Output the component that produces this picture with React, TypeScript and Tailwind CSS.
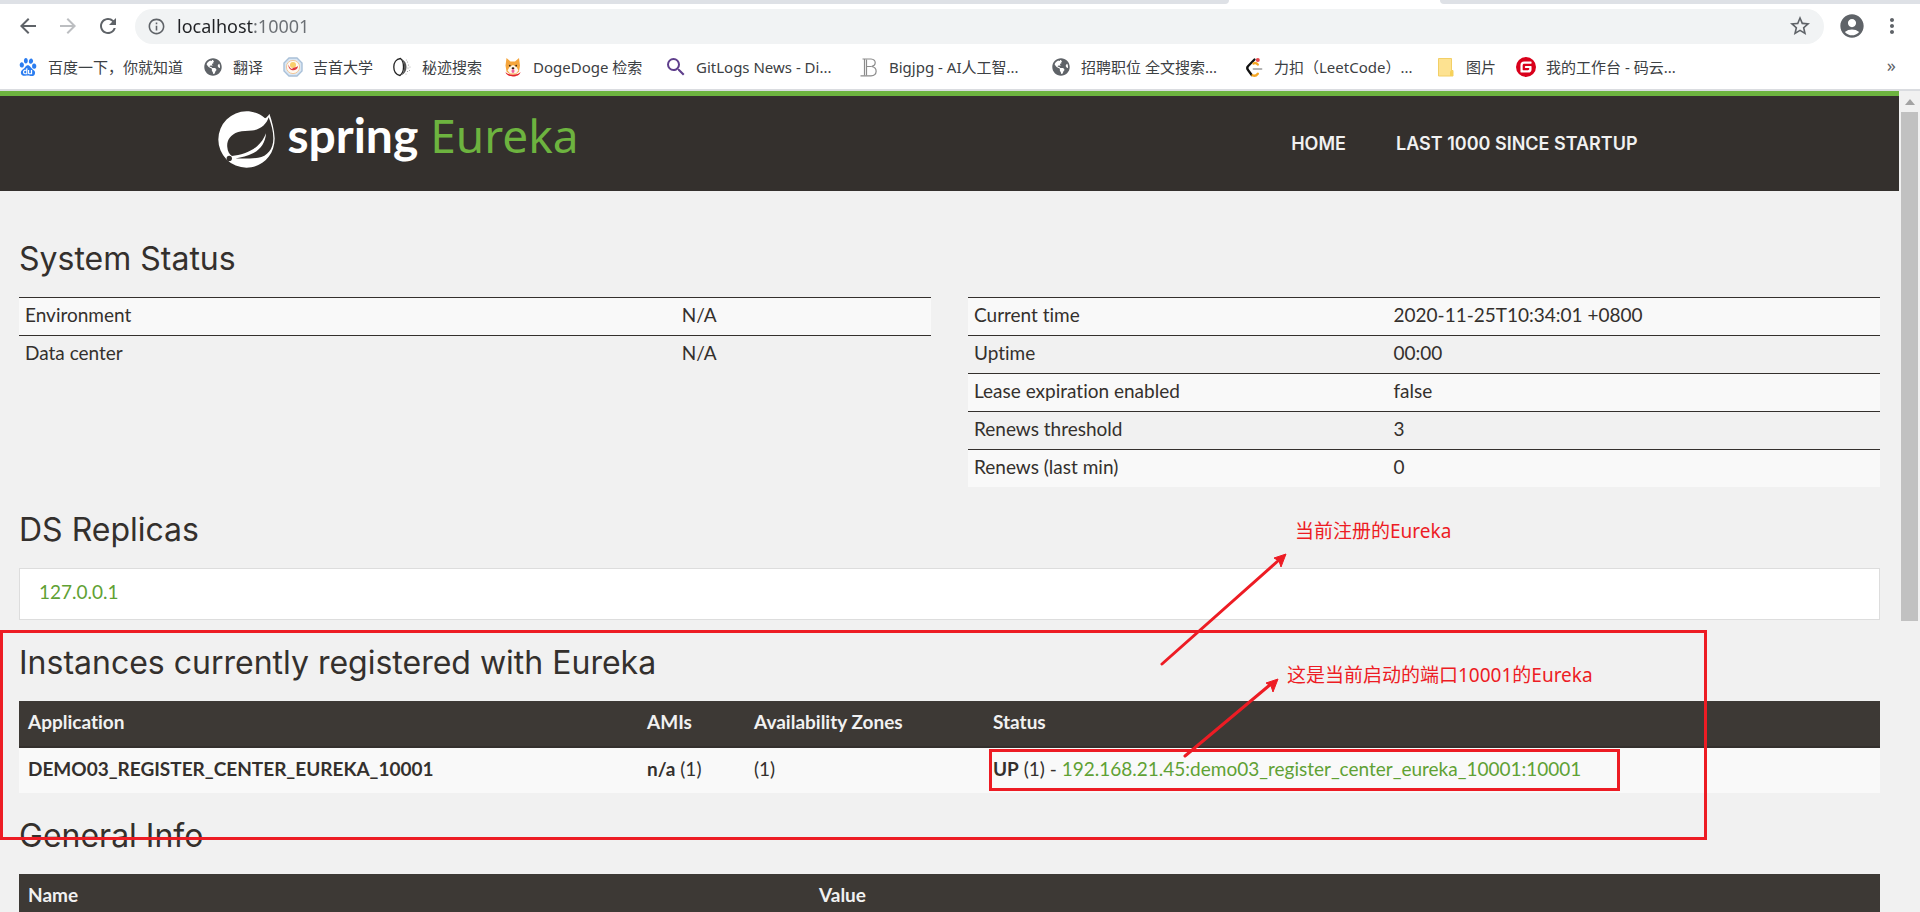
import React from 'react';
import {
  MdArrowBack,
  MdArrowForward,
  MdRefresh,
  MdInfoOutline,
  MdStarBorder,
  MdAccountCircle,
  MdMoreVert,
  MdSearch,
} from 'react-icons/md';
import { FaGlobeAmericas } from 'react-icons/fa';
import { SiBaidu, SiGitee } from 'react-icons/si';

const SANS = "font-['Noto_Sans','Noto_Sans_CJK_SC',sans-serif]";
const BODY = "font-[Lato,'Noto_Sans_CJK_SC',sans-serif]";
const HEADING = "font-[Inter,'Noto_Sans',sans-serif]";

function BadgeIcon() {
  return (
    <svg viewBox="0 0 20 20" className="size-5">
      <path d="M6 1h8l5 5v8l-5 5H6l-5-5V6z" fill="#dbe7f3" stroke="#a9c0d8" strokeWidth="1.4" />
      <circle cx="10" cy="10" r="6.6" fill="#fffaf2" stroke="#f3c79a" strokeWidth="1" />
      <circle cx="10" cy="8" r="3" fill="#f9cf6a" />
      <path d="M5.500 7.500c-1 7 9 8 9.500 1.500-2 2-5 1-6 3-1.500-.5-3-2-3.500-4.500z" fill="#e0393e" />
    </svg>
  );
}

function MoonIcon() {
  return (
    <svg viewBox="0 0 20 20" className="size-5">
      <path d="M8.500 1.500C4 2 1.800 6 1.800 10s2.200 7.600 6.200 8.500c2-1.500 3.500-4.500 3.500-8.500s-1-7-3-8.500z" fill="#fff" stroke="#222" strokeWidth="1.3" />
      <path d="M9.500 2c3.500 1.500 5 4.500 5 8s-1.500 6.500-5 8.200c1.700-2 2.600-5 2.600-8.200s-.9-6-2.600-8z" fill="#555" />
      <g fill="#999">
        <circle cx="15.500" cy="5" r=".6" />
        <circle cx="16.500" cy="8" r=".6" />
        <circle cx="16" cy="11" r=".6" />
        <circle cx="18" cy="10" r=".5" />
        <circle cx="15.500" cy="14.500" r=".6" />
        <circle cx="17.500" cy="13.500" r=".5" />
        <circle cx="14" cy="17" r=".5" />
        <circle cx="14.300" cy="3" r=".5" />
      </g>
    </svg>
  );
}

function DogIcon() {
  return (
    <svg viewBox="0 0 20 20" className="size-5">
      <path d="M3.500 1l4 3.500h4.500L16 1l1 7.500-1 6-3.500 3h-5l-4-3-1-6z" fill="#f5a63d" />
      <path d="M10 8l3.500 2 2 3.500-2.500 3h-6l-2.500-3 2-3.500z" fill="#fff7ea" />
      <circle cx="6.800" cy="8.700" r=".9" fill="#3a2a1a" />
      <circle cx="13.200" cy="8.700" r=".9" fill="#3a2a1a" />
      <ellipse cx="10" cy="11.300" rx="1.400" ry="1" fill="#2b1d14" />
      <ellipse cx="10" cy="14" rx="1.500" ry="1.900" fill="#f2619a" />
      <path d="M2.500 15c3 3.500 12 3.500 15 0-.5 3-4 4.500-7.500 4.500S3 18 2.500 15z" fill="#e3262b" />
    </svg>
  );
}

function OutlineBIcon() {
  return (
    <svg viewBox="0 0 20 20" className="size-5" fill="none" stroke="#8b8b8b" strokeWidth="1.200">
      <path d="M3.500 2h8.500c5.500.5 5.500 6.500 .5 7.500 6.500 1 6 9-.5 9.300H1.500" />
      <path d="M5.500 2v16.500M7.500 2.500v16M7.500 9.500h5" />
    </svg>
  );
}

function LeetCodeIcon() {
  return (
    <svg viewBox="0 0 20 20" className="size-5" fill="none" strokeWidth="2.300" strokeLinecap="round">
      <path d="M10.500 2.500L4.200 9c-1.300 1.300-1.300 2.700 0 4.200l3.500 4.800" stroke="#111" />
      <path d="M8.500 18.200c1.800 1 3.700.6 5.300-1.500M9.500 6.500c1.500-1 3-.6 4.300 1" stroke="#f5a623" />
      <path d="M9.500 12h8" stroke="#b3b3b3" strokeWidth="1.800" />
      <circle cx="13.800" cy="3" r="2" fill="#e5484d" />
    </svg>
  );
}

function FolderIcon() {
  return (
    <svg viewBox="0 0 20 20" className="size-5">
      <path d="M2.500 1.500h13v12h1.500v5.500H2.500z" fill="#fde291" stroke="#f2cf66" strokeWidth="1" />
      <path d="M14 19v-4.500l1.500-1.500 1.500 1.500V19z" fill="#f7d25a" />
    </svg>
  );
}

const globe = <FaGlobeAmericas className="size-[18px] text-[#5f6368]" />;

const bookmarks: { label: string; icon: React.ReactNode; width: string }[] = [
  { label: '百度一下，你就知道', icon: <SiBaidu className="size-[18px] text-[#2b7df0]" />, width: 'w-[185px]' },
  { label: '翻译', icon: globe, width: 'w-[80px]' },
  { label: '吉首大学', icon: <BadgeIcon />, width: 'w-[109px]' },
  { label: '秘迹搜索', icon: <MoonIcon />, width: 'w-[111px]' },
  { label: 'DogeDoge 检索', icon: <DogIcon />, width: 'w-[163px]' },
  { label: 'GitLogs News - Di...', icon: <MdSearch className="size-6 shrink-0 text-[#5f3f8c]" />, width: 'w-[193px]' },
  { label: 'Bigjpg - AI人工智...', icon: <OutlineBIcon />, width: 'w-[192px]' },
  { label: '招聘职位 全文搜索...', icon: globe, width: 'w-[193px]' },
  { label: '力扣（LeetCode）...', icon: <LeetCodeIcon />, width: 'w-[192px]' },
  { label: '图片', icon: <FolderIcon />, width: 'w-[80px]' },
  { label: '我的工作台 - 码云...', icon: <SiGitee className="size-5 text-[#d9001b]" />, width: 'w-[170px]' },
];

function BrowserChrome() {
  return (
    <header className={`shrink-0 border-b-2 border-[#dadce0] bg-white ${SANS}`}>
      <div className="flex h-1">
        <div className="w-[64%] rounded-br-md bg-[#dee1e6]" />
        <div className="w-[11%] bg-white" />
        <div className="flex-1 rounded-bl-md bg-[#dee1e6]" />
      </div>
      <div className="flex h-11 items-center pl-4 pr-2">
        <div className="flex w-[119px] items-center gap-4 text-[#5f6368]">
          <button aria-label="Back"><MdArrowBack className="size-6" /></button>
          <button aria-label="Forward" className="text-[#bcbec1]"><MdArrowForward className="size-6" /></button>
          <button aria-label="Reload"><MdRefresh className="size-6" /></button>
        </div>
        <div className="flex h-[35px] flex-1 items-center gap-[11px] rounded-full bg-[#f1f3f4] pl-3 pr-3 text-[#5f6368]">
          <MdInfoOutline className="size-[19px]" />
          <input
            aria-label="Address"
            defaultValue="localhost:10001"
            className="h-7 min-w-0 flex-1 bg-[linear-gradient(90deg,#202124_76px,#6b6f74_76px)] bg-clip-text text-[18px] text-transparent outline-none"
          />
          <button aria-label="Bookmark this page"><MdStarBorder className="size-6" /></button>
        </div>
        <div className="flex items-center gap-[14px] pl-[14px] pr-2 text-[#5f6368]">
          <button aria-label="Profile"><MdAccountCircle className="size-7" /></button>
          <button aria-label="Menu"><MdMoreVert className="size-6" /></button>
        </div>
      </div>
      <nav aria-label="Bookmarks" className="flex h-[41px] items-start justify-between pt-[7px] pl-[18px] pr-6">
        <ul className="flex">
          {bookmarks.map((b) => (
            <li key={b.label} className={b.width}>
              <a href="#" className="flex items-center gap-[10px] whitespace-nowrap text-[15px] leading-6 text-[#3c4043]">
                <span className="flex size-5 shrink-0 items-center justify-center">{b.icon}</span>
                {b.label}
              </a>
            </li>
          ))}
        </ul>
        <button aria-label="More bookmarks" className="text-[18px] leading-5 text-[#5f6368]">»</button>
      </nav>
    </header>
  );
}

function SpringLeaf() {
  return (
    <svg viewBox="23 17 172 172" className="size-[57px] shrink-0">
      <path d="M165 39C150 25 130 18 109 18a85 85 0 1 0 0 170c48 0 85-38 85-88-1-27-8-52-16-75-3 6-7 10-13 14z" fill="#fff" />
      <path
        d="M176 36c-7 20-22 36-50 40-14 2-28 0-42 4-26 8-35 28-33 46 1 13 6 22 14 27 26-3 56-12 76-30 13-11 21-24 27-39-2 28-16 48-38 60-18 10-36 13-54 16 20 1 46 1 68-2 28-4 46-26 46-58 0-22-6-42-14-64z"
        fill="#34302d"
      />
      <circle cx="57" cy="160" r="8" fill="#34302d" />
    </svg>
  );
}

function SiteHeader() {
  return (
    <header className="border-t-[5px] border-[#6db33f] bg-[#34302d]">
      <div className="mx-auto flex h-[95px] w-[77%] items-center justify-between pr-[43px]">
        <a href="#" aria-label="Spring Eureka" className="flex items-start pb-2">
          <SpringLeaf />
          <span className="-mt-[6px] pl-3 font-[Lato,sans-serif] text-[48px] leading-[60px] font-bold text-white">spring</span>
          <span className={`-mt-[6px] pl-3 text-[46px] leading-[60px] text-[#6db33f] ${SANS}`}>Eureka</span>
        </a>
        <nav className={`flex gap-[50px] text-[18px] font-semibold text-[#f1f1f1] ${HEADING}`}>
          <a href="#">HOME</a>
          <a href="#">LAST 1000 SINCE STARTUP</a>
        </nav>
      </div>
    </header>
  );
}

function Heading({ children }: { children: React.ReactNode }) {
  return <h1 className={`mb-[18px] text-[32px] leading-10 ${HEADING}`}>{children}</h1>;
}

function StatusTable({ rows, first }: { rows: [string, string][]; first: string }) {
  return (
    <table className="w-full table-fixed border-separate border-spacing-0">
      <tbody>
        {rows.map(([name, value]) => (
          <tr key={name} className="odd:bg-[#f9f9f9]">
            <td className={`border-t border-[#34302d] px-[6px] pt-1 pb-[7px] ${first}`}>{name}</td>
            <td className="border-t border-[#34302d] px-[6px] pt-1 pb-[7px]">{value}</td>
          </tr>
        ))}
      </tbody>
    </table>
  );
}

const TH = 'border-b-2 border-[#34302d] bg-[#3d3935] px-[9px] pt-2 pb-[11px] text-left font-bold text-[#f1f1f1]';
const TD = 'bg-[#f9f9f9] px-[9px] pt-2 pb-[11px]';

function Annotations() {
  return (
    <div className={`pointer-events-none absolute -top-[13px] -left-[19px] z-10 text-[19px] leading-7 whitespace-nowrap text-[#ed1c24] ${SANS}`}>
      <div className="absolute top-0 left-0 h-[210px] w-[1707px] border-[3px] border-[#ed1c24]" />
      <div className="absolute top-[119px] left-[989px] h-[42px] w-[631px] border-[3px] border-[#ed1c24]" />
      <svg className="absolute top-0 left-0 overflow-visible" width="1" height="1" fill="#ed1c24" stroke="#ed1c24">
        <path d="M1162 34L1279-70M1185 126L1271 54" strokeWidth="3" strokeLinecap="round" />
        <path d="M1286-76l-12 4 5 3 2 6zM1278 49l-12 4 5 3 2 6z" strokeWidth="1" strokeLinejoin="round" />
      </svg>
      <span className="absolute -top-[113px] left-[1295px]">当前注册的Eureka</span>
      <span className="absolute top-[31px] left-[1287px]">这是当前启动的端口10001的Eureka</span>
    </div>
  );
}

export default function App() {
  return (
    <div className="flex h-screen flex-col overflow-hidden bg-[#f1f1f1]">
      <BrowserChrome />
      <div className="flex min-h-0 flex-1">
        <div className={`min-w-0 flex-1 overflow-hidden text-[19px] leading-[26px] text-[#34302d] [font-variant-ligatures:none] ${BODY}`}>
          <SiteHeader />
          <main className="flex flex-col gap-[23px] px-[19px] pt-12">
            <section>
              <Heading>System Status</Heading>
              <div className="grid grid-cols-2 items-start gap-[37px]">
                <StatusTable first="w-[72%]" rows={[['Environment', 'N/A'], ['Data center', 'N/A']]} />
                <StatusTable
                  first="w-[46%]"
                  rows={[
                    ['Current time', '2020-11-25T10:34:01 +0800'],
                    ['Uptime', '00:00'],
                    ['Lease expiration enabled', 'false'],
                    ['Renews threshold', '3'],
                    ['Renews (last min)', '0'],
                  ]}
                />
              </div>
            </section>
            <section>
              <Heading>DS Replicas</Heading>
              <ul className="border border-[#dddddd] bg-white px-[19px] pt-[10px] pb-[14px]">
                <li><a href="#" className="text-[#5fa134]">127.0.0.1</a></li>
              </ul>
            </section>
            <section className="relative">
              <Heading>Instances currently registered with Eureka</Heading>
              <table className="w-full table-fixed border-separate border-spacing-0">
                <thead>
                  <tr>
                    <th className={`w-[619px] ${TH}`}>Application</th>
                    <th className={`w-[107px] ${TH}`}>AMIs</th>
                    <th className={`w-[239px] ${TH}`}>Availability Zones</th>
                    <th className={TH}>Status</th>
                  </tr>
                </thead>
                <tbody>
                  <tr>
                    <td className={TD}><b>DEMO03_REGISTER_CENTER_EUREKA_10001</b></td>
                    <td className={TD}><b>n/a</b> (1)</td>
                    <td className={TD}>(1)</td>
                    <td className={TD}>
                      <b>UP</b> (1) -{' '}
                      <a href="#" className="text-[#5fa134]">192.168.21.45:demo03_register_center_eureka_10001:10001</a>
                    </td>
                  </tr>
                </tbody>
              </table>
              <Annotations />
            </section>
            <section>
              <Heading>General Info</Heading>
              <table className="w-full table-fixed border-separate border-spacing-0">
                <thead>
                  <tr>
                    <th className={`w-[791px] ${TH}`}>Name</th>
                    <th className={TH}>Value</th>
                  </tr>
                </thead>
              </table>
            </section>
          </main>
        </div>
        <div aria-hidden="true" className="flex w-[21px] shrink-0 flex-col items-center bg-[#f1f1f1]">
          <div className="flex h-[21px] shrink-0 items-center">
            <svg viewBox="0 0 10 6" className="h-[6px] w-[10px]"><path d="M0 6l5-6 5 6z" fill="#a3a3a3" /></svg>
          </div>
          <div className="h-[62%] w-[17px] bg-[#c1c1c1]" />
        </div>
      </div>
    </div>
  );
}
